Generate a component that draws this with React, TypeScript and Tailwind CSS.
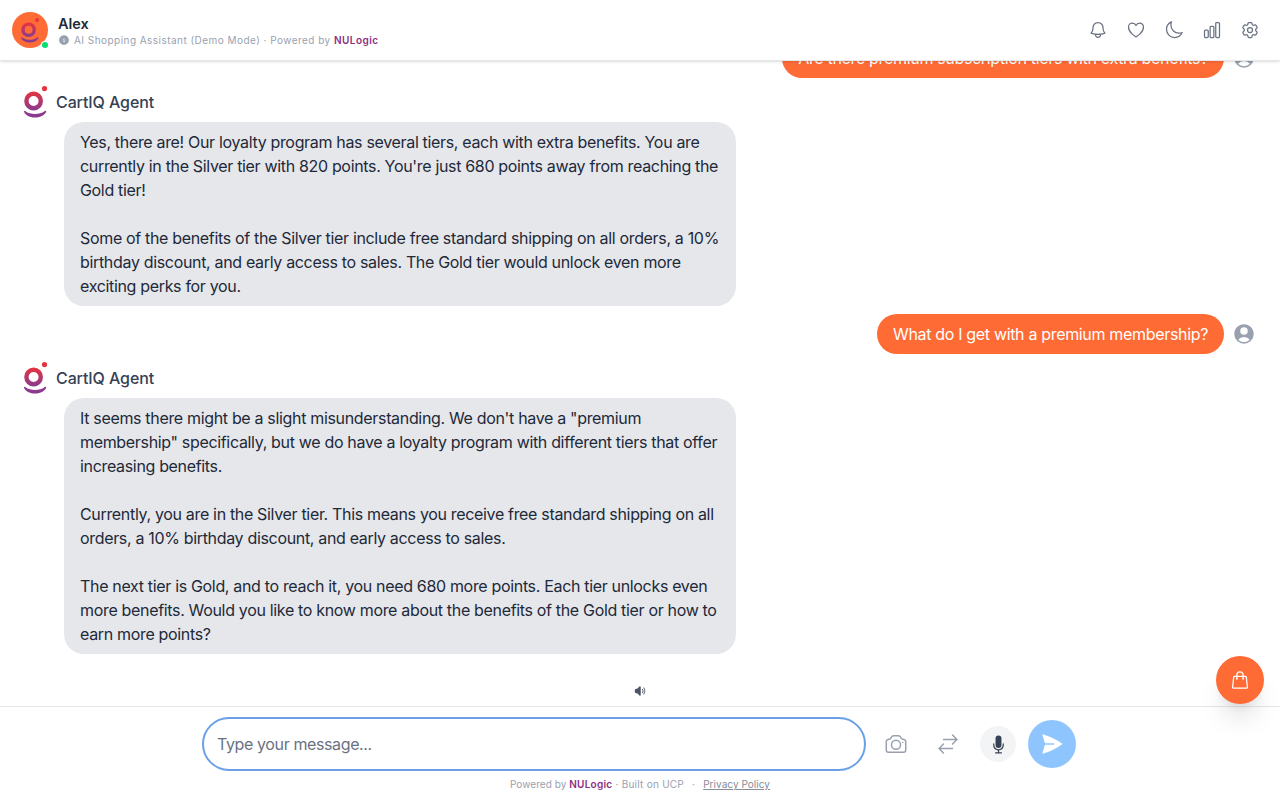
import { HiMicrophone, HiPaperAirplane, HiSpeakerWave, HiUserCircle, HiInformationCircle } from 'react-icons/hi2';
import {
  HiOutlineArrowsRightLeft,
  HiOutlineBell,
  HiOutlineCamera,
  HiOutlineChartBar,
  HiOutlineCog6Tooth,
  HiOutlineHeart,
  HiOutlineMoon,
  HiOutlineShoppingBag,
} from 'react-icons/hi2';

function Logo({ className }: { className: string }) {
  return (
    <svg viewBox="0 0 24 32" className={className} fill="none">
      <defs>
        <linearGradient id="cartiq" gradientUnits="userSpaceOnUse" x1="0" y1="6" x2="0" y2="24">
          <stop offset="0" stopColor="#e5343f" />
          <stop offset="1" stopColor="#8b3a8f" />
        </linearGradient>
      </defs>
      <circle cx="9.6" cy="15" r="7.2" stroke="url(#cartiq)" strokeWidth="4.4" />
      <circle cx="20.5" cy="2.6" r="2.6" fill="#e5343f" />
      <path
        d="M1.2 25C4 27.2 7.5 27.9 11 27.9S18 27.2 20.8 25C21.8 24.4 22.6 25.2 22 26.2 20 29.6 15.5 31.5 11 31.5S2 29.6.2 26.2C-.3 25.2.4 24.4 1.2 25z"
        fill="#8b3a8f"
      />
    </svg>
  );
}

function AgentMessage({ paragraphs }: { paragraphs: string[] }) {
  return (
    <div>
      <div className="flex items-center gap-2 h-8 mb-1">
        <Logo className="w-6 h-8" />
        <span className="text-base font-medium tracking-[-0.1px] text-gray-700">CartIQ Agent</span>
      </div>
      <div className="ml-10 w-[672px] bg-gray-200 rounded-[20px] px-4 py-2 text-base leading-6 tracking-[-0.33px] text-gray-800 flex flex-col gap-6">
        {paragraphs.map((p) => (
          <p key={p}>{p}</p>
        ))}
      </div>
    </div>
  );
}

function UserMessage({ text }: { text: string }) {
  return (
    <div className="flex items-center justify-end gap-2">
      <div className="bg-[#ff6b35] text-white text-base leading-6 tracking-[-0.33px] rounded-[20px] px-4 py-2">{text}</div>
      <HiUserCircle className="w-6 h-6 text-gray-400" />
    </div>
  );
}

export default function App() {
  const headerIcons = [HiOutlineBell, HiOutlineHeart, HiOutlineMoon, HiOutlineChartBar, HiOutlineCog6Tooth];

  return (
    <div className="relative h-screen flex flex-col bg-white font-['Inter',sans-serif]">
      {/* Header */}
      <header className="h-[61px] shrink-0 z-10 bg-white border-b border-gray-200 shadow-sm flex items-center justify-between pl-3 pr-[12px]">
        <div className="flex items-center gap-2.5">
          <div className="relative w-9 h-9 rounded-full bg-[#ff6b35] flex items-center justify-center">
            <Logo className="w-[19px] h-[25px] mt-px" />
            <span className="absolute right-0 bottom-0 w-1.5 h-1.5 rounded-full bg-green-400 ring-1 ring-white" />
          </div>
          <div className="pt-1">
            <div className="text-[14.5px] leading-4 font-semibold text-gray-800">Alex</div>
            <div className="flex items-center gap-1 text-[10px] leading-4 tracking-[0.46px] text-gray-400">
              <HiInformationCircle className="w-3 h-3 text-gray-400" />
              <span>
                AI Shopping Assistant (Demo Mode) · Powered by{' '}
                <span className="font-semibold text-[#8c2f7f]">NULogic</span>
              </span>
            </div>
          </div>
        </div>
        <div className="flex items-center gap-0.5">
          {headerIcons.map((Icon, i) => (
            <button key={i} className="p-2 text-gray-500">
              <Icon className="w-5 h-5" />
            </button>
          ))}
        </div>
      </header>

      {/* Messages */}
      <main className="flex-1 min-h-0 overflow-hidden flex flex-col justify-end gap-2 px-6">
        <UserMessage text="Are there premium subscription tiers with extra benefits?" />
        <AgentMessage
          paragraphs={[
            "Yes, there are! Our loyalty program has several tiers, each with extra benefits. You are currently in the Silver tier with 820 points. You're just 680 points away from reaching the Gold tier!",
            'Some of the benefits of the Silver tier include free standard shipping on all orders, a 10% birthday discount, and early access to sales. The Gold tier would unlock even more exciting perks for you.',
          ]}
        />
        <UserMessage text="What do I get with a premium membership?" />
        <AgentMessage
          paragraphs={[
            'It seems there might be a slight misunderstanding. We don\'t have a "premium membership" specifically, but we do have a loyalty program with different tiers that offer increasing benefits.',
            'Currently, you are in the Silver tier. This means you receive free standard shipping on all orders, a 10% birthday discount, and early access to sales.',
            'The next tier is Gold, and to reach it, you need 680 more points. Each tier unlocks even more benefits. Would you like to know more about the benefits of the Gold tier or how to earn more points?',
          ]}
        />
        <div className="h-11 shrink-0 flex items-end justify-center pb-[9px]">
          <HiSpeakerWave className="w-3 h-3 text-gray-600" />
        </div>
      </main>

      {/* Composer */}
      <footer className="shrink-0 border-t border-gray-200 bg-white">
        <div className="flex items-center justify-center gap-3 pt-[10px] pr-0.5">
          <input
            placeholder="Type your message..."
            className="w-[664px] h-[54px] rounded-full border-2 border-[#6aa0e8] px-[13px] text-base tracking-[-0.38px] text-gray-800 placeholder:text-gray-500 outline-none"
          />
          <button className="w-10 h-10 -ml-0.5 flex items-center justify-center text-gray-400">
            <HiOutlineCamera className="w-6 h-6" />
          </button>
          <button className="w-10 h-10 flex items-center justify-center text-gray-400">
            <HiOutlineArrowsRightLeft className="w-6 h-6" />
          </button>
          <button className="w-9 h-9 rounded-full bg-gray-100 flex items-center justify-center text-gray-700">
            <HiMicrophone className="w-[19px] h-[19px]" />
          </button>
          <button className="w-12 h-12 rounded-full bg-blue-300 flex items-center justify-center text-white">
            <HiPaperAirplane className="w-6 h-6" />
          </button>
        </div>
        <div className="h-[29px] pb-[2px] flex items-center justify-center text-[10px] tracking-[0.25px] text-gray-400">
          <span>
            <span className="tracking-[0.05px]">Powered by </span>
            <span className="font-semibold text-[#8c2f7f]">NULogic</span> · Built on UCP
          </span>
          <span className="mx-2">·</span>
          <span className="text-[#868c98] underline tracking-[0.05px]">Privacy Policy</span>
        </div>
      </footer>

      {/* Cart button */}
      <button className="absolute right-4 top-[656px] w-12 h-12 rounded-full bg-[#ff6b35] text-white shadow-xl flex items-center justify-center">
        <HiOutlineShoppingBag className="w-5 h-5" />
      </button>
    </div>
  );
}
